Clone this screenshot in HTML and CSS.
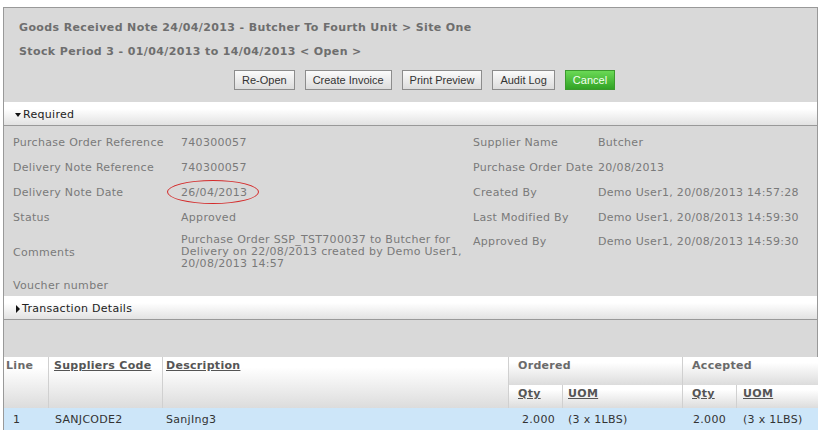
FILE: index.html
```html
<!DOCTYPE html>
<html lang="en">
<head>
  <meta charset="UTF-8">
  <meta name="viewport" content="width=device-width, initial-scale=1.0">
  <title>Goods Received Note</title>
  <link rel="stylesheet" href="styles.css">
</head>
<body>
  <div class="grn">
    <div class="grn-head">
      <div class="grn-title">Goods Received Note 24/04/2013 - Butcher To Fourth Unit &gt; Site One</div>
      <div class="grn-title">Stock Period 3 - 01/04/2013 to 14/04/2013 &lt; Open &gt;</div>
      <div class="actions">
        <button class="btn">Re-Open</button>
        <button class="btn">Create Invoice</button>
        <button class="btn">Print Preview</button>
        <button class="btn">Audit Log</button>
        <button class="btn btn-green">Cancel</button>
      </div>
    </div>

    <div class="section-bar open"><span class="arrow"></span>Required</div>

    <table class="fields">
      <tr>
        <td class="label">Purchase Order Reference</td>
        <td class="value">740300057</td>
        <td class="label">Supplier Name</td>
        <td class="value">Butcher</td>
      </tr>
      <tr>
        <td class="label">Delivery Note Reference</td>
        <td class="value">740300057</td>
        <td class="label">Purchase Order Date</td>
        <td class="value">20/08/2013</td>
      </tr>
      <tr>
        <td class="label">Delivery Note Date</td>
        <td class="value"><span class="marked">26/04/2013</span></td>
        <td class="label">Created By</td>
        <td class="value">Demo User1, 20/08/2013 14:57:28</td>
      </tr>
      <tr class="short">
        <td class="label">Status</td>
        <td class="value">Approved</td>
        <td class="label">Last Modified By</td>
        <td class="value">Demo User1, 20/08/2013 14:59:30</td>
      </tr>
      <tr class="tall">
        <td class="label">Comments</td>
        <td class="value comments">Purchase Order SSP_TST700037 to Butcher for Delivery on 22/08/2013 created by Demo User1, 20/08/2013 14:57</td>
        <td class="label top">Approved By</td>
        <td class="value top">Demo User1, 20/08/2013 14:59:30</td>
      </tr>
      <tr class="last">
        <td class="label">Voucher number</td>
        <td class="value"></td>
        <td></td>
        <td></td>
      </tr>
    </table>

    <div class="section-bar closed"><span class="arrow"></span>Transaction Details</div>

    <div class="gap"></div>

    <table class="lines">
      <colgroup>
        <col style="width:44px">
        <col style="width:114px">
        <col style="width:346px">
        <col style="width:54px">
        <col style="width:120px">
        <col style="width:54px">
        <col style="width:82px">
      </colgroup>
      <thead>
        <tr class="head-1">
          <th rowspan="2" class="c-line">Line</th>
          <th rowspan="2" class="c-code"><a href="#">Suppliers Code</a></th>
          <th rowspan="2" class="c-desc"><a href="#">Description</a></th>
          <th colspan="2" class="c-qty">Ordered</th>
          <th colspan="2" class="c-qty">Accepted</th>
        </tr>
        <tr class="head-2">
          <th class="c-qty"><a href="#">Qty</a></th>
          <th class="c-uom"><a href="#">UOM</a></th>
          <th class="c-qty"><a href="#">Qty</a></th>
          <th class="c-uom2"><a href="#">UOM</a></th>
        </tr>
      </thead>
      <tbody>
        <tr class="selected">
          <td class="d-line">1</td>
          <td class="d-code">SANJCODE2</td>
          <td class="d-desc">SanjIng3</td>
          <td class="d-qty">2.000</td>
          <td class="d-uom">(3 x 1LBS)</td>
          <td class="d-qty2">2.000</td>
          <td class="d-uom2">(3 x 1LBS)</td>
        </tr>
      </tbody>
    </table>
  </div>
</body>
</html>
```

FILE: styles.css
```css
body {
  margin: 0;
  padding: 7px 3px 0 3px;
  font-family: "DejaVu Sans", Verdana, sans-serif;
  font-size: 11px;
  letter-spacing: 0.3px;
  background-color: #fff;
  color: #7a7a7a;
}

.grn {
  border: 1px solid #999;
  background-color: #d9d9d9;
  height: 460px;
}

.grn-head {
  padding: 8px 15px 12px 15px;
}

.grn-title {
  font-weight: bold;
  color: #6e6e6e;
  line-height: 24px;
  letter-spacing: 0.38px;
}

.actions {
  display: flex;
  gap: 10px;
  margin-top: 6px;
  padding-left: 215px;
}

.btn {
  font-family: "Liberation Sans", Arial, sans-serif;
  font-size: 11px;
  letter-spacing: 0;
  height: 20px;
  padding: 0 7px;
  border: 1px solid #8c8c8c;
  background: linear-gradient(#fbfbfb, #dcdcdc);
  color: #333;
  cursor: pointer;
}

.btn-green {
  border-color: #3c9a2e;
  background: linear-gradient(#6ad955, #32a326);
  color: #f4fff0;
}

.section-bar {
  height: 21px;
  padding: 2px 0 0 10px;
  line-height: 20px;
  color: #222;
  background: linear-gradient(#ffffff 30%, #e2e2e2);
  border-bottom: 1px solid #999;
  display: flex;
  align-items: center;
}

.section-bar .arrow {
  width: 0;
  height: 0;
  margin-right: 2px;
}

.section-bar.open .arrow {
  border-left: 3px solid transparent;
  border-right: 3px solid transparent;
  border-top: 4px solid #111;
  margin-left: 1px;
}

.section-bar.closed .arrow {
  border-top: 4px solid transparent;
  border-bottom: 4px solid transparent;
  border-left: 4px solid #111;
  margin-left: 2px;
}

.fields {
  border-collapse: collapse;
  table-layout: fixed;
  margin-top: 4px;
  width: 814px;
}

.fields td {
  padding: 0;
  height: 25px;
  vertical-align: middle;
  white-space: nowrap;
}

.fields tr.short td {
  height: 24px;
}

.fields tr.tall td {
  height: 46px;
}

.fields tr.tall td.top {
  height: 40px;
}

.fields tr.last td {
  height: 21px;
}

.fields td.label:nth-child(1) {
  width: 168px;
  padding-left: 9px;
}

.fields td.value:nth-child(2) {
  width: 292px;
}

.fields td.label:nth-child(3) {
  width: 125px;
}

.fields td.comments {
  white-space: normal;
  line-height: 12px;
  padding-right: 5px;
}

.fields td.top {
  vertical-align: top;
  padding-top: 6px;
  line-height: 13px;
}

.marked {
  position: relative;
}

.marked::after {
  content: "";
  position: absolute;
  left: -14px;
  top: -6px;
  width: 90px;
  height: 22px;
  border: 1px solid #d42a2a;
  border-radius: 50%;
}

.gap {
  height: 37px;
}

.lines {
  border-collapse: separate;
  border-spacing: 0;
  table-layout: fixed;
  width: 814px;
}

.lines th {
  text-align: left;
  vertical-align: top;
  font-weight: bold;
  color: #6a6a6a;
  padding: 2px 0 0 0;
  background: linear-gradient(#ffffff 20%, #dcdcdc);
  border-left: 1px solid #d0d0d0;
}

.lines th:first-child {
  border-left: none;
}

.lines .head-2 th:first-child {
  border-left: 1px solid #d0d0d0;
}

.lines .head-1 th {
  height: 26px;
}

.lines .head-2 th {
  height: 21px;
}

.lines th a {
  color: #555;
  text-decoration: underline;
}

.lines .c-line { padding-left: 2px; }
.lines .c-code { padding-left: 5px; }
.lines .c-desc { padding-left: 3px; }
.lines .c-qty { padding-left: 9px; }
.lines .c-uom { padding-left: 5px; }
.lines .c-uom2 { padding-left: 6px; }

.lines td {
  height: 22px;
  padding: 0;
  color: #333;
  white-space: nowrap;
  border-left: 1px solid transparent;
}

.lines td:first-child {
  border-left: none;
}

.selected td {
  background-color: #cde6f9;
}

.lines .d-line { padding-left: 9px; }
.lines .d-code { padding-left: 6px; }
.lines .d-desc { padding-left: 3px; }
.lines .d-qty { padding-left: 13px; }
.lines .d-uom { padding-left: 5px; }
.lines .d-qty2 { padding-left: 10px; }
.lines .d-uom2 { padding-left: 6px; }
```
